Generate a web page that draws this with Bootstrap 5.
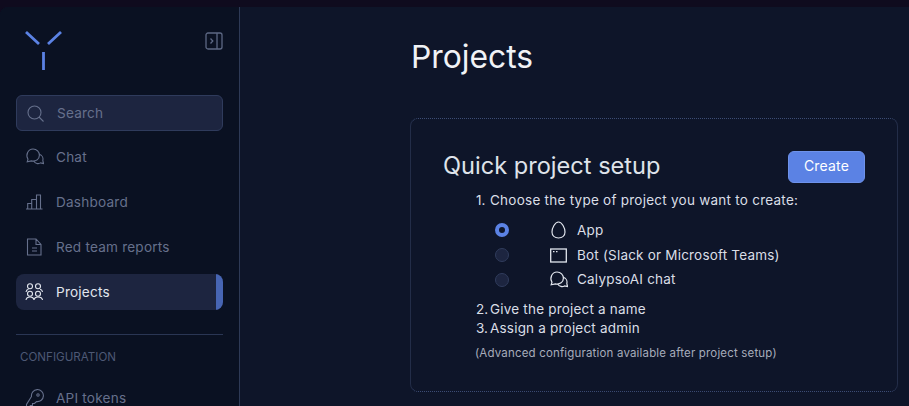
<!DOCTYPE html>
<html lang="en">
<head>
<meta charset="utf-8">
<title>Projects</title>
<link href="https://cdn.jsdelivr.net/npm/bootstrap@5.3.0/dist/css/bootstrap.min.css" rel="stylesheet">
<style>
html,body{height:100%;}
body{background:#0f0b1e;font-family:Inter,"Noto Sans",sans-serif;overflow:hidden;color:#e2e6ee;}
.app-shell{height:399px;margin-top:7px;overflow:hidden;border-top-left-radius:8px;background:#0e1529;}
.side-pane{width:240px;flex:none;background:#0a1122;border-right:1px solid #2e3a56;padding:0 16px;overflow:hidden;}
.logo-row{height:88px;padding:0 0 0 8px;}
.logo-row svg.brand{margin-top:23px;}
.collapse-ic{margin-top:25px;}
.search-box{height:36px;background:#1d2540;border:1px solid #2f3b5c;border-radius:6px;color:#66708c;font-size:13.6px;padding-left:10px;gap:13px;letter-spacing:.2px;}
.side-link{height:36px;margin-top:9px;padding-left:9px;gap:12px;color:#66708c;font-size:13.6px;letter-spacing:.2px;border-radius:8px;text-decoration:none;position:relative;overflow:hidden;}
.side-link svg{flex:none;}
.side-link.is-first{margin-top:8px;}
.side-link.is-on{background:#1d2540;color:#e2e6ee;}
.side-link.is-on::after{content:"";position:absolute;right:0;top:0;bottom:0;width:7px;background:#4765b3;}
.side-rule{border-top:1px solid #2a3654;margin:24px 0 0;opacity:1;}
.side-head{font-size:11.6px;color:#4d5874;margin:15px 0 0 4px;line-height:15px;}
.side-head + .side-link{margin-top:15px;}
.main-pane{min-width:0;padding-left:170px;padding-right:11px;}
.page-title{font-size:31.8px;font-weight:400;color:#f0f2f6;line-height:36px;margin:32px 0 43px 1px;}
.setup-card{height:274px;background:transparent;border:1px solid #232d48;border-top:1px dotted #3c4c74;border-bottom:1px dotted #3c4c74;border-radius:8px;padding:32px;}
.setup-title{font-size:23.6px;font-weight:400;color:#dfe3ea;line-height:30px;margin:0 0 2px;}
.create-btn{--bs-btn-bg:#5b82e4;--bs-btn-border-color:#6e92ea;--bs-btn-color:#fff;--bs-btn-padding-x:0;--bs-btn-padding-y:0;width:77px;height:32px;padding-bottom:4px;font-size:14px;border-radius:6px;letter-spacing:.2px;}
.setup-body{margin-left:33px;font-size:13.5px;letter-spacing:.2px;color:#dadee6;line-height:19px;}
.step-wide{letter-spacing:.25px;}
.step-num{display:inline-block;width:14px;letter-spacing:0;}
.setup-choices{margin:8px 0 8px 19px;}
.setup-choice{height:24.7px;}
.pick{width:14px;height:14px;border-radius:50%;background:#1d2540;border:1px solid #303c5c;flex:none;margin-right:39px;}
.pick.is-on{background:#0e1529;border:4px solid #5b82e4;}
.pick-ic{width:20px;flex:none;margin-right:9px;display:flex;justify-content:center;}
.setup-note{font-size:11.5px;color:#a6acbb;margin-top:8px;line-height:15px;letter-spacing:.17px;margin-left:-1px;}
</style>
</head>
<body>
<div class="app-shell d-flex">
  <aside class="side-pane">
    <div class="logo-row d-flex justify-content-between align-items-start">
      <svg class="brand" width="38" height="42" viewBox="0 0 38 42" fill="none" stroke="#5b82e4" stroke-width="2.800"><path d="M2 2 L15 14M37 2 L24 14M19.500 22V40"/></svg>
      <svg class="collapse-ic" width="18" height="18" viewBox="0 0 18 18" fill="none" stroke="#5d6884" stroke-width="1.300"><rect x="1" y="1" width="16" height="16" rx="2"/><path d="M12 1V17M5.500 6.500 7.800 9 5.500 11.500"/></svg>
    </div>
    <div class="search-box d-flex align-items-center">
      <svg width="17" height="17" viewBox="0 0 17 17" fill="none" stroke="#66708c" stroke-width="1.100"><circle cx="7.500" cy="7.500" r="6.500"/><path d="M12 12 16.500 16.500"/></svg>
      <span>Search</span>
    </div>
    <a class="side-link is-first d-flex align-items-center" href="#">
      <svg width="19" height="18" viewBox="0 0 19 18" fill="none" stroke="#66708c" stroke-width="1.100"><path d="M2.200 13.800 3 11.200C.300 7 3 1 8 1c3.800 0 6.400 2.800 6.400 6.200 0 3.800-3.500 6.700-8 5.700z"/><path d="M14.300 6.300c2.700 1 4.200 3.600 3.500 6l.7 3.300-3-.7c-2 1.300-5.300.8-6.800-1.900"/></svg>
      <span>Chat</span>
    </a>
    <a class="side-link d-flex align-items-center" href="#">
      <svg width="19" height="18" viewBox="0 0 19 18" fill="none" stroke="#66708c" stroke-width="1.100"><path d="M1 16H17.500M2.700 16V10.500H6.700V16M6.700 16V6.500H11.500V16M11.500 16V2H15.500V16"/></svg>
      <span>Dashboard</span>
    </a>
    <a class="side-link d-flex align-items-center" href="#">
      <svg width="19" height="18" viewBox="0 0 19 18" fill="none" stroke="#66708c" stroke-width="1.100"><path d="M2.500 1H11L16 6.500V17H2.500zM11 1V6.500H16M7 10H12M7 13H12"/></svg>
      <span>Red team reports</span>
    </a>
    <a class="side-link is-on d-flex align-items-center" href="#">
      <svg width="19" height="18" viewBox="0 0 19 18" fill="none" stroke="#e2e6ee" stroke-width="1.100"><circle cx="5" cy="3.200" r="2.500"/><circle cx="13" cy="3.200" r="2.500"/><circle cx="5" cy="10.800" r="2.500"/><circle cx="13" cy="10.800" r="2.500"/><path d="M1 9c.2-1.600 1.300-2.500 2.500-2.700M17.500 9c-.2-1.600-1.300-2.500-2.500-2.700M1 17c.3-2 2-3 4-3s3.700 1 4 3c.3-2 2-3 4-3s4.200 1 4.500 3"/></svg>
      <span>Projects</span>
    </a>
    <hr class="side-rule">
    <div class="side-head">CONFIGURATION</div>
    <a class="side-link d-flex align-items-center" href="#">
      <svg width="19" height="19" viewBox="0 0 19 19" fill="none" stroke="#66708c" stroke-width="1.100"><path d="M6.500 7.500a6 6 0 1 1 5 5L9.500 14.500H7.500V16.500H5.500L4 18H1.500V15.500z"/><circle cx="13" cy="6" r="1.200"/></svg>
      <span>API tokens</span>
    </a>
  </aside>
  <main class="main-pane flex-grow-1">
    <h1 class="page-title">Projects</h1>
    <section class="card setup-card">
      <div class="d-flex justify-content-between align-items-center">
        <h2 class="setup-title">Quick project setup</h2>
        <button type="button" class="btn create-btn">Create</button>
      </div>
      <div class="setup-body">
        <div class="mt-2 step-wide"><span class="step-num">1.</span>Choose the type of project you want to create:</div>
        <div class="setup-choices">
          <div class="setup-choice d-flex align-items-center">
            <span class="pick is-on"></span>
            <span class="pick-ic"><svg width="15" height="18" viewBox="0 0 15 18" fill="none" stroke="#e2e6ee" stroke-width="1.200"><path d="M7.500 1C4 1 1 7 1 11c0 3.700 2.800 6 6.500 6s6.500-2.300 6.500-6C14 7 11 1 7.500 1z"/></svg></span>
            <span>App</span>
          </div>
          <div class="setup-choice d-flex align-items-center">
            <span class="pick"></span>
            <span class="pick-ic"><svg width="17" height="15" viewBox="0 0 17 15" fill="none" stroke="#e2e6ee" stroke-width="1.300"><rect x=".7" y="1" width="15.600" height="13"/><path d="M3 3.700H4.500M6 3.700H7.500"/></svg></span>
            <span>Bot (Slack or Microsoft Teams)</span>
          </div>
          <div class="setup-choice d-flex align-items-center">
            <span class="pick"></span>
            <span class="pick-ic"><svg width="19" height="18" viewBox="0 0 19 18" fill="none" stroke="#e2e6ee" stroke-width="1.200"><path d="M2.200 13.800 3 11.200C.300 7 3 1 8 1c3.800 0 6.400 2.800 6.400 6.200 0 3.800-3.500 6.700-8 5.700z"/><path d="M14.300 6.300c2.700 1 4.200 3.600 3.500 6l.7 3.300-3-.7c-2 1.300-5.300.8-6.800-1.900"/></svg></span>
            <span>CalypsoAI chat</span>
          </div>
        </div>
        <div><span class="step-num">2.</span>Give the project a name</div>
        <div><span class="step-num">3.</span>Assign a project admin</div>
        <div class="setup-note">(Advanced configuration available after project setup)</div>
      </div>
    </section>
  </main>
</div>
<script src="https://cdn.jsdelivr.net/npm/bootstrap@5.3.0/dist/js/bootstrap.bundle.min.js"></script>
</body>
</html>
